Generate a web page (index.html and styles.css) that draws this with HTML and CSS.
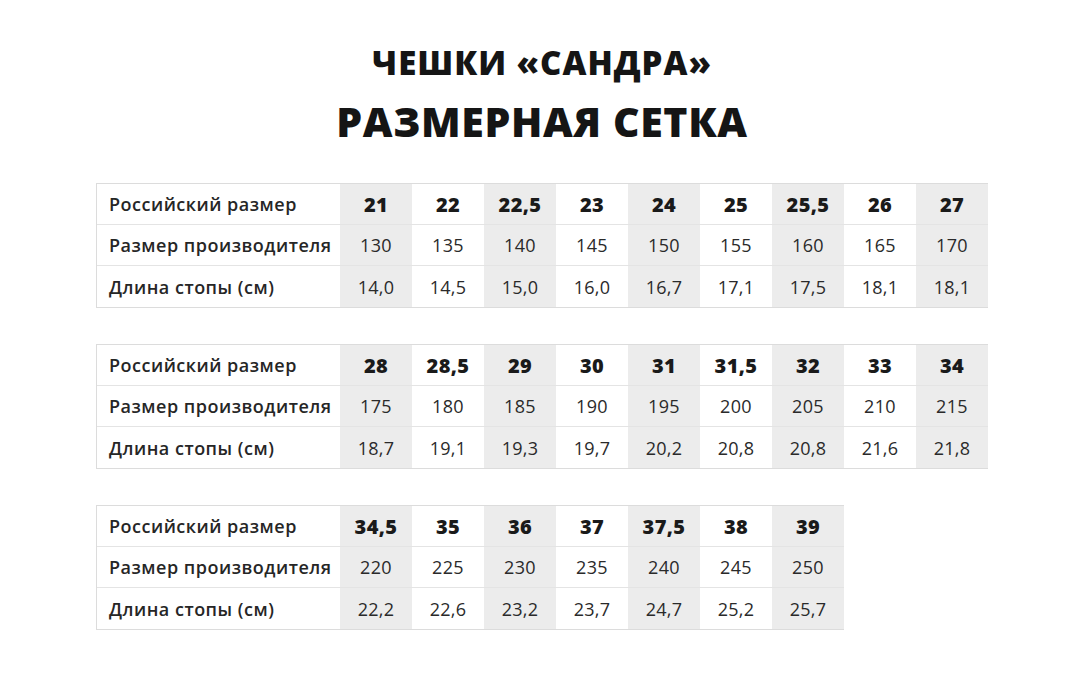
FILE: index.html
```html
<!DOCTYPE html>
<html lang="ru">
<head>
<meta charset="utf-8">
<link rel="stylesheet" href="styles.css">
</head>
<body>
<div class="page">
  <h1 class="title">
    <span class="t1">ЧЕШКИ «САНДРА»</span>
    <span class="t2">РАЗМЕРНАЯ СЕТКА</span>
  </h1>

  <div class="grid g9">
    <div class="lab">Российский размер</div>
    <div class="h s">21</div><div class="h">22</div><div class="h s">22,5</div><div class="h">23</div><div class="h s">24</div><div class="h">25</div><div class="h s">25,5</div><div class="h">26</div><div class="h s">27</div>
    <div class="lab">Размер производителя</div>
    <div class="c s">130</div><div class="c">135</div><div class="c s">140</div><div class="c">145</div><div class="c s">150</div><div class="c">155</div><div class="c s">160</div><div class="c">165</div><div class="c s">170</div>
    <div class="lab">Длина стопы (см)</div>
    <div class="c s">14,0</div><div class="c">14,5</div><div class="c s">15,0</div><div class="c">16,0</div><div class="c s">16,7</div><div class="c">17,1</div><div class="c s">17,5</div><div class="c">18,1</div><div class="c s">18,1</div>
  </div>

  <div class="grid g9">
    <div class="lab">Российский размер</div>
    <div class="h s">28</div><div class="h">28,5</div><div class="h s">29</div><div class="h">30</div><div class="h s">31</div><div class="h">31,5</div><div class="h s">32</div><div class="h">33</div><div class="h s">34</div>
    <div class="lab">Размер производителя</div>
    <div class="c s">175</div><div class="c">180</div><div class="c s">185</div><div class="c">190</div><div class="c s">195</div><div class="c">200</div><div class="c s">205</div><div class="c">210</div><div class="c s">215</div>
    <div class="lab">Длина стопы (см)</div>
    <div class="c s">18,7</div><div class="c">19,1</div><div class="c s">19,3</div><div class="c">19,7</div><div class="c s">20,2</div><div class="c">20,8</div><div class="c s">20,8</div><div class="c">21,6</div><div class="c s">21,8</div>
  </div>

  <div class="grid g7">
    <div class="lab">Российский размер</div>
    <div class="h s">34,5</div><div class="h">35</div><div class="h s">36</div><div class="h">37</div><div class="h s">37,5</div><div class="h">38</div><div class="h s">39</div>
    <div class="lab">Размер производителя</div>
    <div class="c s">220</div><div class="c">225</div><div class="c s">230</div><div class="c">235</div><div class="c s">240</div><div class="c">245</div><div class="c s">250</div>
    <div class="lab">Длина стопы (см)</div>
    <div class="c s">22,2</div><div class="c">22,6</div><div class="c s">23,2</div><div class="c">23,7</div><div class="c s">24,7</div><div class="c">25,2</div><div class="c s">25,7</div>
  </div>
</div>
</body>
</html>
```

FILE: styles.css
```css
* { box-sizing: border-box; }
html, body {
  margin: 0;
  padding: 0;
  background: #ffffff;
}
body {
  font-family: "Open Sans", "DejaVu Sans", sans-serif;
  color: #1c1c1c;
}
.page {
  width: 1066px;
  height: 687px;
  padding: 42px 0 0 96px;
  display: flex;
  flex-direction: column;
  gap: 36px;
}
.title {
  margin: 0;
  width: 892px;
  display: flex;
  flex-direction: column;
  align-items: center;
  font-weight: 800;
  color: #151515;
}
.t1 {
  font-size: 33px;
  line-height: 42px;
  letter-spacing: 1px;
}
.t2 {
  margin-top: 11px;
  font-size: 41px;
  line-height: 52px;
  letter-spacing: 0.6px;
}
.grid {
  display: grid;
  grid-auto-rows: 41px;
  border: 1px solid #dcdcdc;
  background: #fff;
}
.g9 {
  grid-template-columns: 243px repeat(9, 72px);
  width: 892px;
}
.g7 {
  grid-template-columns: 243px repeat(7, 72px);
  width: 748px;
}
.lab, .h, .c {
  display: flex;
  align-items: center;
  border-bottom: 1px solid #e4e4e4;
}
.lab {
  padding-left: 12px;
  font-size: 18px;
  font-weight: 600;
  color: #262626;
  letter-spacing: 0.5px;
}
.h, .c {
  justify-content: center;
}
.h {
  font-size: 20px;
  font-weight: 800;
  color: #1a1a1a;
  letter-spacing: 0.4px;
}
.c {
  font-size: 18px;
  font-weight: 400;
  color: #2a2a2a;
  letter-spacing: 0.3px;
}
.s {
  background: #ececec;
}
.g9 > div:nth-child(n+21),
.g7 > div:nth-child(n+17) {
  border-bottom: none;
}
```
